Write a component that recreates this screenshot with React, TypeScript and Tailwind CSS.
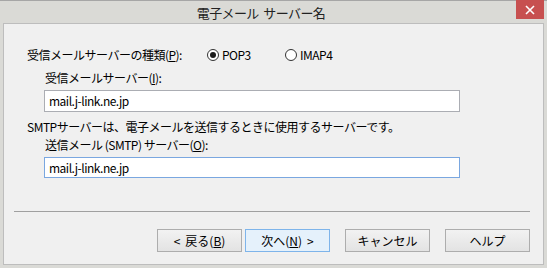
const font = { fontFamily: '"Noto Sans CJK JP", "Noto Sans", sans-serif' };

function Radio({ checked, label }: { checked?: boolean; label: string }) {
  return (
    <div className="flex items-center gap-[3px]">
      <span className="w-[12px] h-[12px] rounded-full border border-[#333] bg-white flex items-center justify-center">
        {checked && <span className="w-[6px] h-[6px] rounded-full bg-[#1a1a1a]" />}
      </span>
      <span>{label}</span>
    </div>
  );
}

function Btn({ children, primary }: { children: React.ReactNode; primary?: boolean }) {
  return (
    <button
      className={`w-[85px] h-[23px] flex items-center justify-center gap-[5px] border text-[12px] tracking-normal leading-none ${
        primary
          ? "border-[#7eb4ea] bg-[#e5f1fb]"
          : "border-[#adadad] bg-gradient-to-b from-[#f2f2f2] to-[#e3e3e3]"
      }`}
    >
      {children}
    </button>
  );
}

export default function App() {
  return (
    <div
      className="w-[547px] h-[268px] flex flex-col bg-[#dadad6] border-t border-[#a6a6a6] text-black"
      style={font}
    >
      {/* Title bar */}
      <div className="h-[22px] flex items-start">
        <div className="flex-1 pl-[6px] text-center text-[13px] tracking-[-0.6px] leading-[24px] text-[#222]">
          電子メール&nbsp;&nbsp;サーバー名
        </div>
        <div className="w-[28px] h-[19px] mr-[3px] -mt-px bg-[#c75050] flex items-center justify-center">
          <svg width="10" height="10" viewBox="0 0 10 10">
            <path d="M1 1L9 9M9 1L1 9" stroke="white" strokeWidth="1.6" />
          </svg>
        </div>
      </div>

      {/* Client */}
      <div className="flex-1 mx-[3px] mb-[3px] border border-[#bdbdbd] bg-[#f0f0f0] text-[12px] leading-[16px] tracking-[-0.5px]">
        <div className="pt-[23px] pl-[23px]">
          <div className="flex items-center h-[16px]">
            <span className="w-[180px]">
              受信メールサーバーの種類(<u>P</u>):
            </span>
            <div className="w-[78px]">
              <Radio checked label="POP3" />
            </div>
            <Radio label="IMAP4" />
          </div>

          <div className="mt-[7px] pl-[18px]">
            受信メールサーバー(<u>I</u>):
          </div>
          <div className="mt-[4px] ml-[17px] w-[416px] h-[22px] border border-[#abadb3] bg-white flex items-center pl-[4px]">
            mail.j-link.ne.jp
          </div>

          <div className="mt-[7px]">SMTPサーバーは、電子メールを送信するときに使用するサーバーです。</div>
          <div className="mt-[2px] pl-[18px]">
            送信メール (SMTP) サーバー(<u>O</u>):
          </div>
          <div className="mt-[4px] ml-[17px] w-[416px] h-[21px] border border-[#7aa7e0] bg-white flex items-center pl-[4px]">
            mail.j-link.ne.jp
          </div>
        </div>

        <div className="mt-[33px] ml-[10px] w-[516px] border-t border-[#a0a0a0]" />

        <div className="mt-[17px] pl-[153px] flex">
          <Btn>
            <span>&lt;</span>
            <span>
              戻る(<u>B</u>)
            </span>
          </Btn>
          <div className="ml-[3px]">
            <Btn primary>
              <span>
                次へ(<u>N</u>)
              </span>
              <span>&gt;</span>
            </Btn>
          </div>
          <div className="ml-[15px]">
            <Btn>キャンセル</Btn>
          </div>
          <div className="ml-[15px]">
            <Btn>ヘルプ</Btn>
          </div>
        </div>
      </div>
    </div>
  );
}
